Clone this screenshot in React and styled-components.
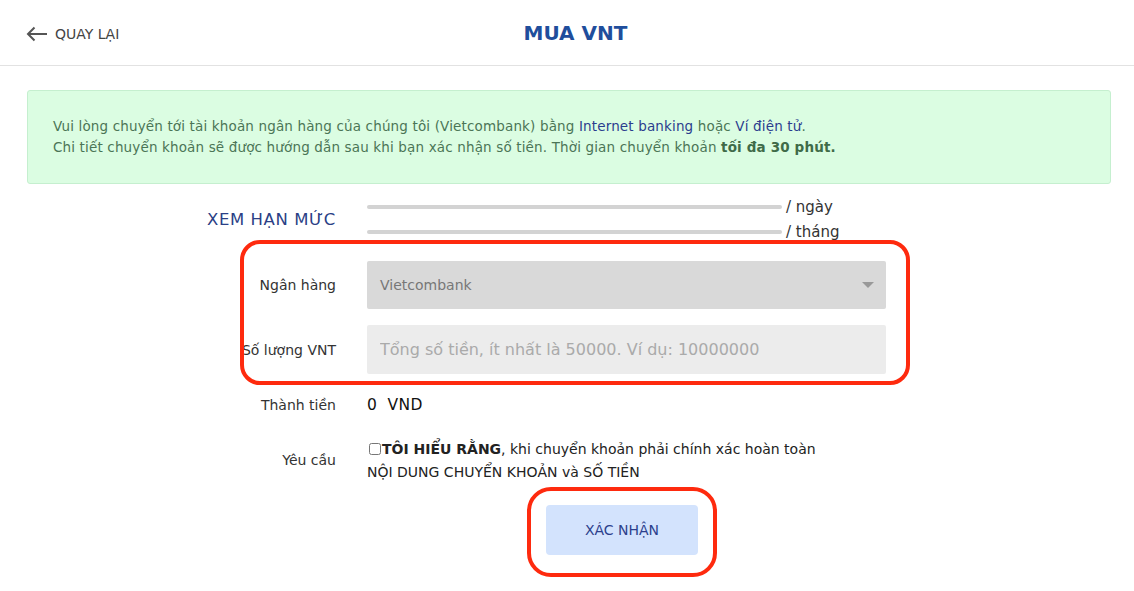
import styled, { createGlobalStyle } from 'styled-components';

const GlobalStyle = createGlobalStyle`
  body {
    margin: 0;
    background: #fff;
    font-family: "DejaVu Sans", "Noto Sans", sans-serif;
    color: #333;
  }
`;

const App = () => {
  const renderHeader = () => (
    <Header>
      <BackLink>
        <svg width="22" height="16" viewBox="0 0 22 16">
          <path d="M21 8H2M8.5 1.5L2 8l6.5 6.5" fill="none" stroke="#555" strokeWidth="2" />
        </svg>
        QUAY LẠI
      </BackLink>
      <Title>MUA VNT</Title>
    </Header>
  );

  const renderNotice = () => (
    <Notice>
      <p>
        Vui lòng chuyển tới tài khoản ngân hàng của chúng tôi (Vietcombank) bằng{' '}
        <Link>Internet banking</Link> hoặc <Link>Ví điện tử</Link>.
      </p>
      <p>
        Chi tiết chuyển khoản sẽ được hướng dẫn sau khi bạn xác nhận số tiền. Thời gian chuyển khoản{' '}
        <b>tối đa 30 phút.</b>
      </p>
    </Notice>
  );

  const renderLimits = () => (
    <Row>
      <LimitLabel>XEM HẠN MỨC</LimitLabel>
      <Limits>
        <LimitLine><Bar />/ ngày</LimitLine>
        <LimitLine><Bar />/ tháng</LimitLine>
      </Limits>
    </Row>
  );

  return (
    <>
      <GlobalStyle />
      {renderHeader()}
      <Page>
        {renderNotice()}
        <Form>
          {renderLimits()}
          <Highlighted>
            <Row>
              <Label>Ngân hàng</Label>
              <Select>
                Vietcombank
                <Caret />
              </Select>
            </Row>
            <Row>
              <Label>Số lượng VNT</Label>
              <Input placeholder="Tổng số tiền, ít nhất là 50000. Ví dụ: 10000000" />
            </Row>
            <Mark $inset="-21px -24px -11px 60px" $radius="20px" />
          </Highlighted>
          <InfoRow>
            <Label>Thành tiền</Label>
            <Amount>0&nbsp; VND</Amount>
          </InfoRow>
          <Row>
            <RequirementLabel>Yêu cầu</RequirementLabel>
            <Terms>
              <Check type="checkbox" />
              <b>TÔI HIỂU RẰNG</b>, khi chuyển khoản phải chính xác hoàn toàn
              <br />
              NỘI DUNG CHUYỂN KHOẢN và SỐ TIỀN
            </Terms>
          </Row>
          <Actions>
            <SubmitWrap>
              <Submit>XÁC NHẬN</Submit>
              <Mark $inset="-18px -19px -22px -19px" $radius="24px" />
            </SubmitWrap>
          </Actions>
        </Form>
      </Page>
    </>
  );
};

const Header = styled.div`
  align-items: center;
  border-bottom: 1px solid #e2e2e2;
  display: flex;
  height: 65px;
  justify-content: center;
  position: relative;
`;

const BackLink = styled.div`
  align-items: center;
  color: #444;
  display: flex;
  font-size: 14px;
  gap: 7px;
  left: 26px;
  position: absolute;
  top: 26px;
`;

const Title = styled.h1`
  color: #1f4e9c;
  font-size: 20px;
  font-weight: 700;
  margin: 0 0 0 17px;
`;

const Page = styled.div`
  padding: 24px 23px 60px 27px;
`;

const Notice = styled.div`
  background: #dbfde2;
  border: 1px solid #c5efcf;
  border-radius: 3px;
  box-sizing: border-box;
  color: #4b7556;
  font-size: 13.5px;
  height: 94px;
  letter-spacing: 0.15px;
  padding: 25px 25px 0;

  > p {
    line-height: 21px;
    margin: 0;
  }

  b {
    color: #3f6b48;
  }
`;

const Link = styled.span`
  color: #2b3d8e;
`;

const Form = styled.div`
  display: flex;
  flex-direction: column;
  gap: 16px;
  margin: 10px 0 0 153px;
  width: 706px;
`;

const Row = styled.div`
  align-items: center;
  column-gap: 31px;
  display: grid;
  grid-template-columns: 156px 519px;
`;

const InfoRow = styled(Row)`
  align-items: start;
  line-height: 20px;
  padding-top: 5px;
`;

const Label = styled.div`
  color: #333;
  font-size: 14px;
  text-align: right;
`;

const RequirementLabel = styled(Label)`
  padding-top: 5px;
`;

const LimitLabel = styled(Label)`
  color: #2b3f86;
  font-size: 16.5px;
  letter-spacing: 0.6px;
`;

const Limits = styled.div`
  display: flex;
  flex-direction: column;
`;

const LimitLine = styled.div`
  align-items: center;
  color: #333;
  display: flex;
  font-size: 15px;
  gap: 4px;
  height: 25px;
  white-space: nowrap;
`;

const Bar = styled.span`
  background: #d3d3d3;
  border-radius: 2px;
  flex: none;
  height: 4px;
  width: 415px;
`;

const Highlighted = styled.div`
  display: flex;
  flex-direction: column;
  gap: 16px;
  margin-top: 1px;
  position: relative;
`;

const Mark = styled.span`
  border: 4px solid #fe2a0e;
  border-radius: ${p => p.$radius};
  inset: ${p => p.$inset};
  pointer-events: none;
  position: absolute;
`;

const Select = styled.div`
  align-items: center;
  background: #d9d9d9;
  border-radius: 2px;
  box-sizing: border-box;
  color: #777;
  display: flex;
  font-size: 14px;
  height: 48px;
  justify-content: space-between;
  padding: 0 12px 0 13px;
`;

const Caret = styled.span`
  border-left: 6px solid transparent;
  border-right: 6px solid transparent;
  border-top: 6px solid #999;
`;

const Input = styled.input`
  background: #ececec;
  border: none;
  border-radius: 2px;
  box-sizing: border-box;
  font-family: inherit;
  font-size: 16px;
  height: 49px;
  outline: none;
  padding: 0 13px;
  width: 100%;

  &::placeholder {
    color: #aaa;
  }
`;

const Amount = styled.div`
  color: #111;
  font-size: 15.5px;
  letter-spacing: 0.3px;
`;

const Terms = styled.div`
  color: #222;
  font-size: 14px;
  line-height: 23px;
  padding-top: 7px;
`;

const Check = styled.input`
  height: 12px;
  margin: 0 1px 0 2px;
  vertical-align: -1px;
  width: 12px;
`;

const Actions = styled.div`
  display: flex;
  padding: 5px 0 0 366px;
`;

const SubmitWrap = styled.div`
  position: relative;
`;

const Submit = styled.button`
  background: #d3e3fd;
  border: none;
  border-radius: 4px;
  color: #2c3f8c;
  display: block;
  font-family: inherit;
  font-size: 14px;
  height: 50px;
  width: 152px;
`;

export default App;
